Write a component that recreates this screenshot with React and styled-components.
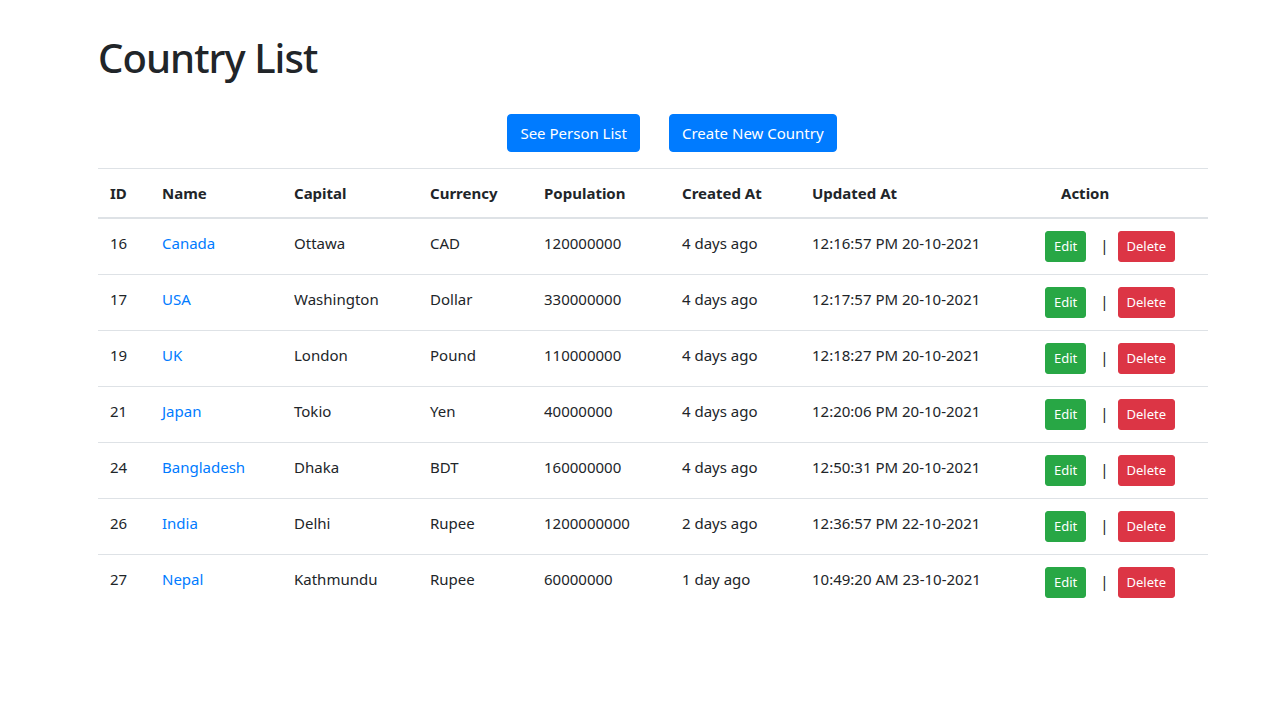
import React from 'react'
import styled, { createGlobalStyle } from 'styled-components'

const countries = [
  { id: 16, name: 'Canada', capital: 'Ottawa', currency: 'CAD', population: '120000000', created: '4 days ago', updated: '12:16:57 PM 20-10-2021' },
  { id: 17, name: 'USA', capital: 'Washington', currency: 'Dollar', population: '330000000', created: '4 days ago', updated: '12:17:57 PM 20-10-2021' },
  { id: 19, name: 'UK', capital: 'London', currency: 'Pound', population: '110000000', created: '4 days ago', updated: '12:18:27 PM 20-10-2021' },
  { id: 21, name: 'Japan', capital: 'Tokio', currency: 'Yen', population: '40000000', created: '4 days ago', updated: '12:20:06 PM 20-10-2021' },
  { id: 24, name: 'Bangladesh', capital: 'Dhaka', currency: 'BDT', population: '160000000', created: '4 days ago', updated: '12:50:31 PM 20-10-2021' },
  { id: 26, name: 'India', capital: 'Delhi', currency: 'Rupee', population: '1200000000', created: '2 days ago', updated: '12:36:57 PM 22-10-2021' },
  { id: 27, name: 'Nepal', capital: 'Kathmundu', currency: 'Rupee', population: '60000000', created: '1 day ago', updated: '10:49:20 AM 23-10-2021' },
]

const widths = [52, 132, 136, 114, 138, 130, 233, 175]

export default function App() {
  return (
    <>
      <GlobalStyle />
      <Container>
        <Title>Country List</Title>
        <ButtonBar>
          <PrimaryButton href='#'>See Person List</PrimaryButton>
          <PrimaryButton href='#'>Create New Country</PrimaryButton>
        </ButtonBar>
        <Table>
          <colgroup>
            {widths.map((w, i) => (
              <col key={i} style={{ width: w }} />
            ))}
          </colgroup>
          <thead>
            <tr>
              <Th>ID</Th>
              <Th>Name</Th>
              <Th>Capital</Th>
              <Th>Currency</Th>
              <Th>Population</Th>
              <Th>Created At</Th>
              <Th>Updated At</Th>
              <Th $indent>Action</Th>
            </tr>
          </thead>
          <tbody>
            {countries.map((c) => (
              <tr key={c.id}>
                <Td>{c.id}</Td>
                <Td>
                  <Link href='#'>{c.name}</Link>
                </Td>
                <Td>{c.capital}</Td>
                <Td>{c.currency}</Td>
                <Td>{c.population}</Td>
                <Td>{c.created}</Td>
                <Td>{c.updated}</Td>
                <Td>
                  <Actions>
                    <SmallButton $variant='success'>Edit</SmallButton>
                    <Sep>|</Sep>
                    <SmallButton $variant='danger'>Delete</SmallButton>
                  </Actions>
                </Td>
              </tr>
            ))}
          </tbody>
        </Table>
      </Container>
    </>
  )
}

const GlobalStyle = createGlobalStyle`
  html, body {
    margin: 0;
    background: #fff;
  }
  body {
    font-family: "Noto Sans", "Open Sans", sans-serif;
    font-size: 16px;
    line-height: 1.5;
    color: #212529;
  }
  * {
    box-sizing: border-box;
  }
`

const Container = styled.div`
  width: 1110px;
  margin-left: 98px;
  padding-top: 34px;
`

const Title = styled.h1`
  font-size: 40px;
  font-weight: 500;
  line-height: 1.2;
  margin: 0 0 32px;
  letter-spacing: -0.95px;
`

const ButtonBar = styled.div`
  display: flex;
  justify-content: center;
  gap: 29px;
  padding-left: 38px;
  margin-bottom: 16px;
`

const PrimaryButton = styled.a`
  display: inline-block;
  padding: 6px 12px;
  font-size: 15px;
  line-height: 24px;
  border: 1px solid #007bff;
  border-radius: 4px;
  background: #007bff;
  color: #fff;
  text-decoration: none;
`

const Table = styled.table`
  width: 1110px;
  table-layout: fixed;
  border-collapse: collapse;
  font-size: 15px;
`

const Th = styled.th`
  text-align: left;
  font-weight: 700;
  padding: 12px 12px 12px ${(p) => (p.$indent ? '28px' : '12px')};
  border-top: 1px solid #dee2e6;
  border-bottom: 2px solid #dee2e6;
  vertical-align: bottom;
  line-height: 24px;
  white-space: nowrap;
`

const Td = styled.td`
  padding: 12px;
  border-top: 1px solid #dee2e6;
  vertical-align: top;
  line-height: 24px;
  white-space: nowrap;
`

const Link = styled.a`
  color: #007bff;
  text-decoration: none;
`

const Actions = styled.div`
  display: flex;
  align-items: center;
`

const Sep = styled.span`
  color: #212529;
  font-size: 15px;
  line-height: 24px;
  margin: -4px 9px 0 14px;
`

const SmallButton = styled.button`
  font-family: inherit;
  font-size: 13px;
  line-height: 21px;
  padding: 4px 8px;
  border-radius: 3px;
  cursor: pointer;
  color: #fff;
  border: 1px solid ${(p) => (p.$variant === 'success' ? '#28a745' : '#dc3545')};
  background: ${(p) => (p.$variant === 'success' ? '#28a745' : '#dc3545')};
`
